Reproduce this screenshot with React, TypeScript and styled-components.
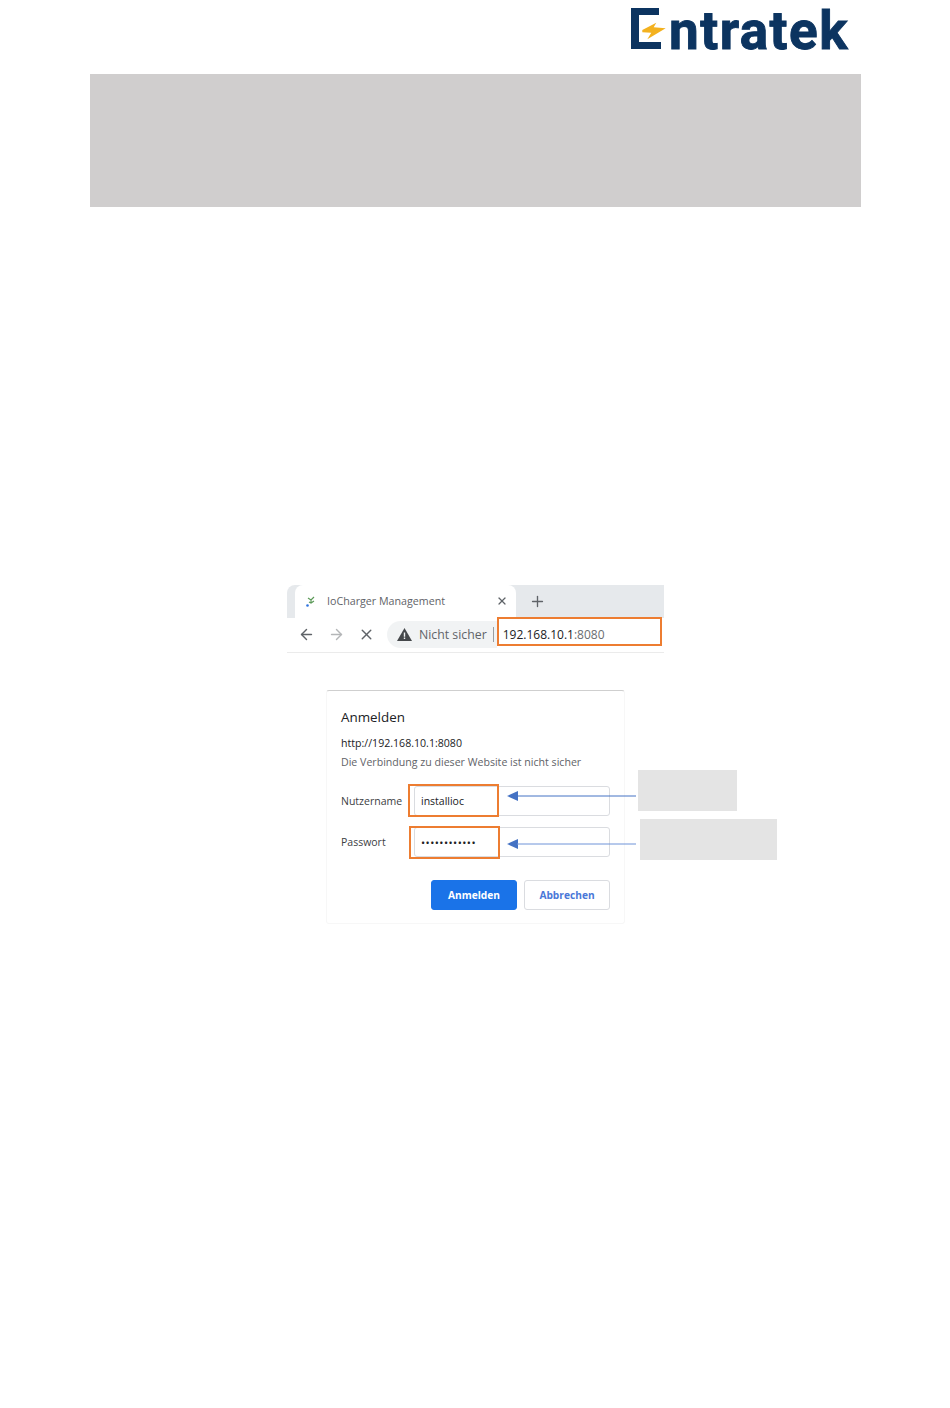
import * as React from "react";
import styled, { createGlobalStyle } from "styled-components";
import { ArrowLeft, ArrowRight, Plus, X } from "lucide-react";

const GlobalStyle = createGlobalStyle`
  html, body {
    margin: 0;
    padding: 0;
    background: #fff;
  }
  * {
    box-sizing: border-box;
  }
`;

const Page = styled.div`
  width: 950px;
  height: 1408px;
  font-family: "Open Sans", "Noto Sans", sans-serif;
  overflow: hidden;
`;

const Header = styled.header`
  display: flex;
  justify-content: flex-end;
  align-items: flex-start;
  height: 74px;
  padding: 0 101px 0 0;
`;

const Logo = styled.div`
  display: flex;
  align-items: flex-start;
  color: #0c3460;
`;

const LogoMarkSvg = styled.svg`
  margin-top: 8px;
`;

const LogoText = styled.span`
  font-family: Roboto, "Liberation Sans", sans-serif;
  font-weight: 700;
  font-size: 53px;
  line-height: 62px;
  letter-spacing: 1.5px;
  -webkit-text-stroke: 0.9px #0c3460;
`;

const Banner = styled.div`
  height: 133px;
  margin: 0 89px 0 90px;
  background: #d0cece;
`;

const Figure = styled.section`
  width: 377px;
  margin: 378px 0 0 287px;
`;

const Browser = styled.div`
  position: relative;
  height: 68px;
  border-bottom: 1px solid #ebebeb;
`;

const TabStrip = styled.div`
  display: flex;
  align-items: flex-end;
  height: 33px;
  padding-left: 8px;
  background: #e6e9ec;
  border-radius: 8px 0 0 0;
`;

const Tab = styled.div`
  display: flex;
  align-items: center;
  width: 221px;
  height: 33px;
  padding: 0 8px 2px 11px;
  background: #fff;
  border-radius: 8px 8px 0 0;
`;

const TabTitle = styled.span`
  flex: 1;
  margin-left: 11px;
  font-size: 10.7px;
  color: #5f6368;
  white-space: nowrap;
`;

const NewTab = styled.div`
  display: flex;
  margin-left: 13px;
  height: 33px;
  align-items: center;
  color: #5f6368;
`;

const Toolbar = styled.div`
  display: flex;
  align-items: center;
  height: 34px;
  padding: 0 0 2px 10px;
  gap: 12px;
`;

const NavIcon = styled.div<{ $dim?: boolean }>`
  display: flex;
  width: 18px;
  justify-content: center;
  color: ${(p) => (p.$dim ? "#b4b6b8" : "#5f6368")};
`;

const AddressBar = styled.div`
  display: flex;
  align-items: center;
  flex: 1;
  height: 27px;
  padding-left: 10px;
  background: linear-gradient(to right, #f1f3f4 0, #f1f3f4 110px, #fff 110px);
  border-radius: 14px 0 0 14px;
  font-size: 12.3px;
`;

const SecurityLabel = styled.span`
  margin-left: 7px;
  color: #5f6368;
  white-space: nowrap;
`;

const Divider = styled.span`
  width: 1px;
  height: 15px;
  margin: 0 9px 0 6px;
  background: #9a9da0;
`;

const Url = styled.span`
  font-size: 12px;
  color: #202124;
  white-space: nowrap;
`;

const UrlPort = styled.span`
  color: #6a6d70;
`;

const Highlight = styled.div<{ $left: number; $top: number; $w: number; $h: number }>`
  position: absolute;
  left: ${(p) => p.$left}px;
  top: ${(p) => p.$top}px;
  width: ${(p) => p.$w}px;
  height: ${(p) => p.$h}px;
  border: 2px solid #ed7d31;
  pointer-events: none;
`;

const Dialog = styled.div`
  position: relative;
  width: 299px;
  height: 234px;
  margin: 37px 0 0 39px;
  padding: 17px 14px 0;
  border: 1px solid #f7f7f7;
  border-top-color: #cfcfcf;
  border-radius: 3px;
  color: #3c4043;
`;

const DialogTitle = styled.h2`
  margin: 0;
  font-size: 13.4px;
  font-weight: 400;
  line-height: 18px;
  color: #202124;
`;

const Origin = styled.div`
  margin-top: 10px;
  font-size: 10.6px;
  line-height: 15px;
  color: #202124;
`;

const Notice = styled.div`
  margin-top: 4px;
  font-size: 10.6px;
  line-height: 15px;
  color: #5f6368;
`;

const Fields = styled.div`
  display: flex;
  flex-direction: column;
  gap: 11px;
  margin-top: 16px;
`;

const FieldRow = styled.div`
  display: grid;
  grid-template-columns: 73px 196px;
  align-items: center;
  font-size: 10.5px;
`;

const FieldLabel = styled.label`
  color: #3c4043;
`;

const FieldBox = styled.div`
  display: flex;
  align-items: center;
  height: 30px;
  padding-left: 6px;
  border: 1px solid #dadce0;
  border-radius: 3px;
  color: #202124;
`;

const Dots = styled.span`
  font-size: 11px;
  letter-spacing: 0.45px;
  color: #202124;
`;

const Actions = styled.div`
  display: flex;
  justify-content: flex-end;
  gap: 7px;
  margin-top: 23px;
`;

const Button = styled.div<{ $primary?: boolean }>`
  display: flex;
  align-items: center;
  justify-content: center;
  width: 86px;
  height: 30px;
  padding-bottom: 1px;
  border-radius: 3px;
  font-size: 10.2px;
  font-weight: 700;
  background: ${(p) => (p.$primary ? "#1a73e8" : "#fff")};
  color: ${(p) => (p.$primary ? "#fff" : "#4a78d8")};
  border: 1px solid ${(p) => (p.$primary ? "#1a73e8" : "#dadce0")};
`;

const Arrow = styled.svg<{ $left: number; $top: number }>`
  position: absolute;
  left: ${(p) => p.$left}px;
  top: ${(p) => p.$top}px;
`;

const Redaction = styled.div<{ $left: number; $top: number; $w: number; $h: number }>`
  position: absolute;
  left: ${(p) => p.$left}px;
  top: ${(p) => p.$top}px;
  width: ${(p) => p.$w}px;
  height: ${(p) => p.$h}px;
  background: #e4e4e4;
`;

function LogoMark() {
  return (
    <LogoMarkSvg width="38" height="42" viewBox="0 0 38 42">
      <path fill="#0c3460" d="M0 0h28v7H8v27h22v7H0z" />
      <path
        fill="#f3b11f"
        d="M11.3 22L25.3 14.7 22.7 19.3 34.7 20.3 16.3 31.3 20.3 24.7 11.3 24.3z"
      />
    </LogoMarkSvg>
  );
}

function Favicon() {
  return (
    <svg width="10" height="12" viewBox="0 0 10 12">
      <path fill="none" stroke="#5c9a58" strokeWidth="1.2" d="M2 3l3 2 3-3M5 5v3M3 7l2 1 3-2" />
      <circle cx="1.5" cy="10.5" r="1.3" fill="#2f74e0" />
    </svg>
  );
}

function WarningIcon() {
  return (
    <svg width="15" height="13" viewBox="0 0 15 13">
      <path fill="#45484b" d="M7.5 0L15 13H0z" />
      <path fill="#f1f3f4" d="M6.8 4.5h1.4v4.2H6.8zM6.8 9.5h1.4v1.4H6.8z" />
    </svg>
  );
}

function AnnotationArrow({ left, top, light }: { left: number; top: number; light?: boolean }) {
  const color = light ? "#6f93d8" : "#4472c4";
  return (
    <Arrow $left={left} $top={top} width="130" height="12" viewBox="0 0 130 12">
      <path fill="#4472c4" d="M0 6l11-5v10z" />
      <path stroke={color} strokeWidth="1" d="M10 6h119" />
    </Arrow>
  );
}

export default function App() {
  return (
    <Page>
      <GlobalStyle />
      <Header>
        <Logo>
          <LogoMark />
          <LogoText>ntratek</LogoText>
        </Logo>
      </Header>
      <Banner />
      <Figure>
        <Browser>
          <TabStrip>
            <Tab>
              <Favicon />
              <TabTitle>IoCharger Management</TabTitle>
              <X size={12} color="#5f6368" strokeWidth={2.4} />
            </Tab>
            <NewTab>
              <Plus size={17} strokeWidth={1.9} />
            </NewTab>
          </TabStrip>
          <Toolbar>
            <NavIcon>
              <ArrowLeft size={17} strokeWidth={2} />
            </NavIcon>
            <NavIcon $dim>
              <ArrowRight size={17} strokeWidth={2} />
            </NavIcon>
            <NavIcon>
              <X size={17} strokeWidth={2} />
            </NavIcon>
            <AddressBar>
              <WarningIcon />
              <SecurityLabel>Nicht sicher</SecurityLabel>
              <Divider />
              <Url>
                192.168.10.1<UrlPort>:8080</UrlPort>
              </Url>
            </AddressBar>
          </Toolbar>
          <Highlight $left={210} $top={32} $w={165} $h={29} />
        </Browser>
        <Dialog>
          <DialogTitle>Anmelden</DialogTitle>
          <Origin>http://192.168.10.1:8080</Origin>
          <Notice>Die Verbindung zu dieser Website ist nicht sicher</Notice>
          <Fields>
            <FieldRow>
              <FieldLabel>Nutzername</FieldLabel>
              <FieldBox>installioc</FieldBox>
            </FieldRow>
            <FieldRow>
              <FieldLabel>Passwort</FieldLabel>
              <FieldBox>
                <Dots>••••••••••••</Dots>
              </FieldBox>
            </FieldRow>
          </Fields>
          <Actions>
            <Button $primary>Anmelden</Button>
            <Button>Abbrechen</Button>
          </Actions>
          <Highlight $left={81} $top={93} $w={91} $h={33} />
          <Highlight $left={82} $top={135} $w={91} $h={33} />
          <AnnotationArrow left={180} top={99} />
          <AnnotationArrow left={180} top={147} light />
          <Redaction $left={311} $top={79} $w={99} $h={41} />
          <Redaction $left={313} $top={128} $w={137} $h={41} />
        </Dialog>
      </Figure>
    </Page>
  );
}
